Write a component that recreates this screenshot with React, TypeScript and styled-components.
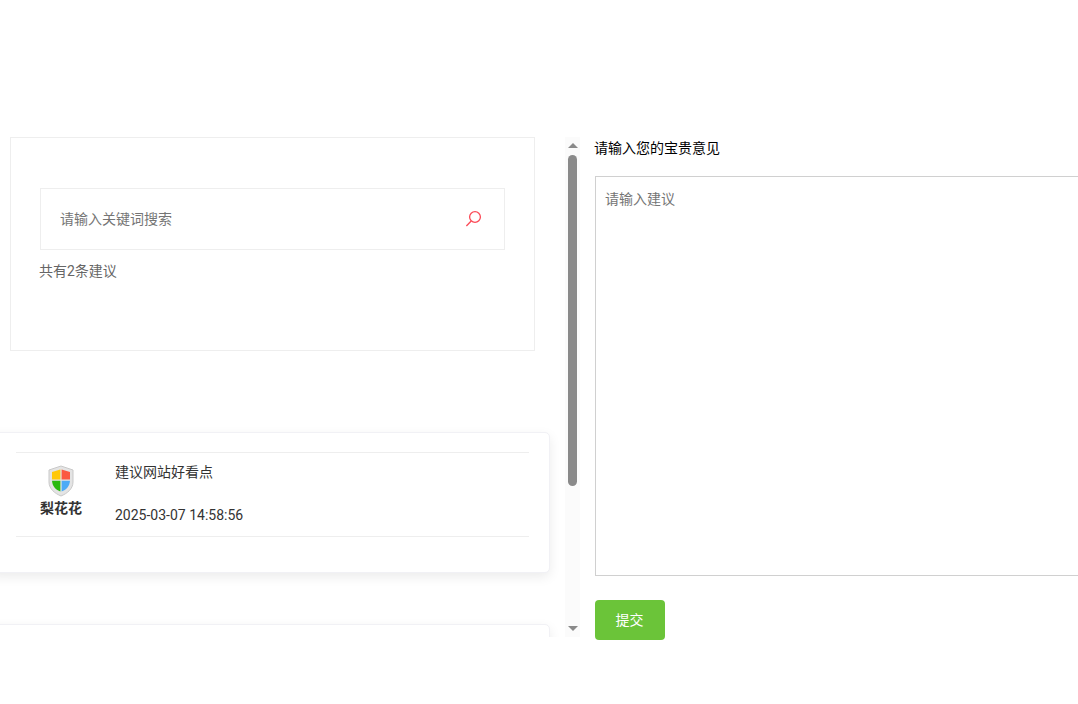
import React from "react";
import styled, { createGlobalStyle } from "styled-components";

const Global = createGlobalStyle`
  html, body { margin: 0; padding: 0; background: #fff; overflow: hidden; }
  body { font-family: Roboto, "Noto Sans CJK SC", sans-serif; font-size: 14px; color: #333; }
  * { box-sizing: border-box; }
`;

const Page = styled.div`
  width: 1078px;
  height: 704px;
  padding-top: 137px;
  display: flex;
  overflow: hidden;
`;

const ListPane = styled.div`
  width: 565px;
  height: 500px;
  flex: none;
  overflow: hidden;
  padding: 0 0 0 10px;
`;

const SearchCard = styled.section`
  width: 525px;
  height: 214px;
  border: 1px solid #eee;
  padding: 50px 29px 0;
`;

const SearchBox = styled.div`
  width: 465px;
  height: 62px;
  border: 1px solid #eee;
  display: flex;
  align-items: center;
  justify-content: space-between;
  padding: 0 22px 0 19px;
`;

const SearchInput = styled.input`
  flex: 1;
  border: 0;
  outline: 0;
  padding: 0;
  font: inherit;
  color: #333;
  &::placeholder { color: #757575; opacity: 1; }
`;

const Count = styled.div`
  margin-top: 11px;
  margin-left: -1px;
  line-height: 20px;
  color: #666;
`;

const PostCard = styled.article<{ $top: number }>`
  width: 560px;
  height: 141px;
  margin: ${(p) => p.$top}px 0 0 -20px;
  background: #fff;
  border: 1px solid #f1f1f5;
  border-radius: 5px;
  box-shadow: 0 4px 12px rgba(0, 0, 0, 0.08);
  padding: 19px 20px 0 25px;
`;

const PostRow = styled.div`
  height: 85px;
  border-top: 1px solid #eee;
  border-bottom: 1px solid #eee;
  display: flex;
`;

const Author = styled.div`
  width: 90px;
  flex: none;
  display: flex;
  flex-direction: column;
  align-items: center;
  padding-top: 12px;
`;

const AuthorName = styled.div`
  margin-top: 1px;
  line-height: 20px;
  font-size: 14px;
  font-weight: 700;
  color: #333;
`;

const PostBody = styled.div`
  padding: 9px 0 0 9px;
  line-height: 20px;
`;

const PostTitle = styled.div`
  color: #333;
`;

const PostDate = styled.div`
  margin-top: 23px;
  color: #333;
`;

const ScrollTrack = styled.div`
  width: 15px;
  height: 500px;
  flex: none;
  background: #fbfbfb;
  display: flex;
  flex-direction: column;
  align-items: center;
`;

const Arrow = styled.div<{ $down?: boolean }>`
  width: 0;
  height: 0;
  flex: none;
  margin: ${(p) => (p.$down ? "auto 0 6px" : "6px 0 0")};
  border-left: 5px solid transparent;
  border-right: 5px solid transparent;
  ${(p) => (p.$down ? "border-top: 5px solid #8a8a8a;" : "border-bottom: 5px solid #8a8a8a;")}
`;

const Thumb = styled.div`
  width: 9px;
  height: 331px;
  flex: none;
  margin-top: 7px;
  background: #8a8a8a;
  border-radius: 5px;
`;

const FormPane = styled.div`
  margin-left: 15px;
  flex: none;
  width: 600px;
`;

const FormLabel = styled.div`
  margin-left: -1px;
  line-height: 22px;
  color: #000;
`;

const TextArea = styled.textarea`
  display: block;
  width: 600px;
  height: 400px;
  margin-top: 17px;
  padding: 12px 9px;
  border: 1px solid #d0d0d0;
  border-radius: 0;
  outline: 0;
  resize: none;
  font: inherit;
  line-height: 20px;
  &::placeholder { color: #757575; opacity: 1; }
`;

const SubmitButton = styled.button`
  display: block;
  width: 70px;
  height: 40px;
  margin-top: 24px;
  padding: 0 1px 2px 0;
  border: 0;
  border-radius: 4px;
  background: #6bc439;
  color: #fff;
  font: inherit;
`;

const SearchIcon = () => (
  <svg width="18" height="18" viewBox="0 0 18 18" fill="none" stroke="#fb4a57" strokeWidth="1.3">
    <circle cx="11" cy="7" r="5.4" />
    <path d="M7.2 11 2.4 16" />
  </svg>
);

const ShieldIcon = () => (
  <svg width="28" height="32" viewBox="0 0 28 32">
    <path d="M14 1 L26 5 V17 C26 24 20 28.5 14 31 C8 28.5 2 24 2 17 V5 Z" fill="#e4e4e4" stroke="#c9c9c9" strokeWidth="1" />
    <path d="M13.4 4.5 L5 7 V14.6 H13.4 Z" fill="#ffc80a" />
    <path d="M14.6 4.5 L23 7 V14.6 H14.6 Z" fill="#fb5a41" />
    <path d="M5 15.8 H13.4 V26.6 C9 25 5.4 21.6 5 15.8 Z" fill="#28b90e" />
    <path d="M14.6 15.8 H23 C22.6 21.6 19 25 14.6 26.6 Z" fill="#4cabf6" />
  </svg>
);

export default function App() {
  return (
    <Page>
      <Global />
      <ListPane>
        <SearchCard>
          <SearchBox>
            <SearchInput placeholder="请输入关键词搜索" />
            <SearchIcon />
          </SearchBox>
          <Count>共有2条建议</Count>
        </SearchCard>
        <PostCard $top={81}>
          <PostRow>
            <Author>
              <ShieldIcon />
              <AuthorName>梨花花</AuthorName>
            </Author>
            <PostBody>
              <PostTitle>建议网站好看点</PostTitle>
              <PostDate>2025-03-07 14:58:56</PostDate>
            </PostBody>
          </PostRow>
        </PostCard>
        <PostCard $top={51} />
      </ListPane>
      <ScrollTrack>
        <Arrow />
        <Thumb />
        <Arrow $down />
      </ScrollTrack>
      <FormPane>
        <FormLabel>请输入您的宝贵意见</FormLabel>
        <TextArea placeholder="请输入建议" />
        <SubmitButton>提交</SubmitButton>
      </FormPane>
    </Page>
  );
}
